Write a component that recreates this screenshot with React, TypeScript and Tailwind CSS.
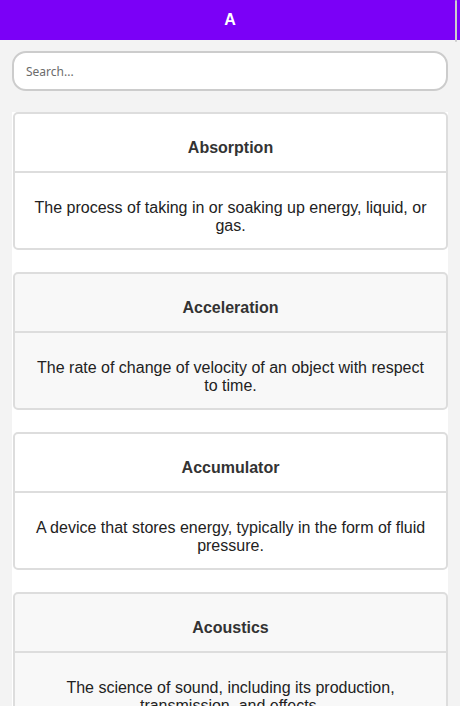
import React from 'react';

type Term = { word: string; meaning: string };

const terms: Term[] = [
  { word: 'Absorption', meaning: 'The process of taking in or soaking up energy, liquid, or gas.' },
  { word: 'Acceleration', meaning: 'The rate of change of velocity of an object with respect to time.' },
  { word: 'Accumulator', meaning: 'A device that stores energy, typically in the form of fluid pressure.' },
  { word: 'Acoustics', meaning: 'The science of sound, including its production, transmission, and effects.' },
  { word: 'Actuator', meaning: 'A component of a machine that is responsible for moving and controlling a mechanism.' },
];

const App: React.FC = () => {
  return (
    <div className="relative h-[706px] overflow-hidden bg-[#f3f3f3] [font-family:'Liberation_Sans',Arial,sans-serif]">
      <header className="flex h-10 items-center justify-center bg-[#7b00f7]">
        <h1 className="text-base font-bold text-white">A</h1>
      </header>
      {/* scroll thumb */}
      <div className="absolute right-[3px] top-0 h-[42px] w-[2px] rounded-full bg-[#cdcdcd]" />

      <div className="mx-3 mt-[11px]">
        <input
          type="text"
          placeholder="Search..."
          className="h-10 w-full rounded-[14px] border-2 border-[#cccccc] bg-white px-3 [font-family:'Noto_Sans',sans-serif] text-xs text-[#333] placeholder:text-[#6b6b6b] outline-none"
        />
      </div>

      <div className="mx-3 mt-[21px] flex flex-col gap-[22px] bg-white">
        {terms.map((t, i) => (
          <div
            key={t.word}
            className={`ml-px rounded-[5px] border-2 border-[#dddddd] ${i % 2 === 0 ? 'bg-white' : 'bg-[#f8f8f8]'}`}
          >
            <div className="h-[59px] border-b-2 border-[#dddddd] pt-[25px] text-center">
              <h2 className="text-base font-bold leading-[18px] text-[#333]">{t.word}</h2>
            </div>
            <p className="px-4 pb-[13px] pt-[26px] text-center text-base leading-[18px] text-[#222]">
              {t.meaning}
            </p>
          </div>
        ))}
      </div>
    </div>
  );
};

export default App;
